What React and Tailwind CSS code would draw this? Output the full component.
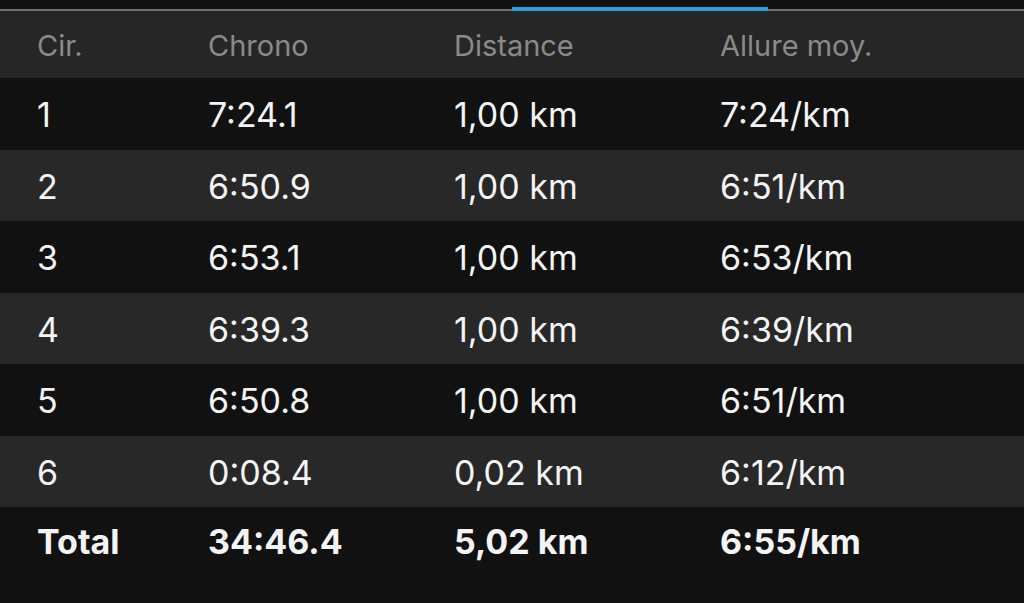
import React from "react";

const laps = [
  { lap: "1", time: "7:24.1", dist: "1,00 km", pace: "7:24/km" },
  { lap: "2", time: "6:50.9", dist: "1,00 km", pace: "6:51/km" },
  { lap: "3", time: "6:53.1", dist: "1,00 km", pace: "6:53/km" },
  { lap: "4", time: "6:39.3", dist: "1,00 km", pace: "6:39/km" },
  { lap: "5", time: "6:50.8", dist: "1,00 km", pace: "6:51/km" },
  { lap: "6", time: "0:08.4", dist: "0,02 km", pace: "6:12/km" },
];

const cols = "grid grid-cols-[171px_246px_266px_1fr] items-center px-[37px]";

export default function App() {
  return (
    <div
      className="w-[1024px] h-[603px] bg-[#111111] overflow-hidden flex flex-col"
      style={{ fontFamily: "Inter, 'Liberation Sans', sans-serif" }}
    >
      {/* tab indicator */}
      <div className="h-[7px]" />
      <div className="flex h-[4px]">
        <div className="w-[512px] border-b-2 border-[#6f6f6f]" />
        <div className="w-[256px] bg-[#2c9fd9]" />
        <div className="flex-1 border-b-2 border-[#6f6f6f]" />
      </div>

      {/* header */}
      <div className={`${cols} h-[67px] pt-[3px] bg-[#262626] text-[#8a8a8a] text-[29px]`}>
        <span>Cir.</span>
        <span>Chrono</span>
        <span>Distance</span>
        <span>Allure moy.</span>
      </div>

      {laps.map((l, i) => (
        <div
          key={l.lap}
          className={`${cols} h-[71.5px] pt-[2px] text-[34px] text-[#f4f4f4] ${
            i % 2 === 0 ? "bg-[#111111]" : "bg-[#282828]"
          }`}
        >
          <span>{l.lap}</span>
          <span>{l.time}</span>
          <span>{l.dist}</span>
          <span>{l.pace}</span>
        </div>
      ))}

      {/* total */}
      <div className={`${cols} h-[68px] text-[34px] font-bold text-[#f4f4f4] bg-[#111111]`}>
        <span>Total</span>
        <span>34:46.4</span>
        <span>5,02 km</span>
        <span>6:55/km</span>
      </div>
    </div>
  );
}
